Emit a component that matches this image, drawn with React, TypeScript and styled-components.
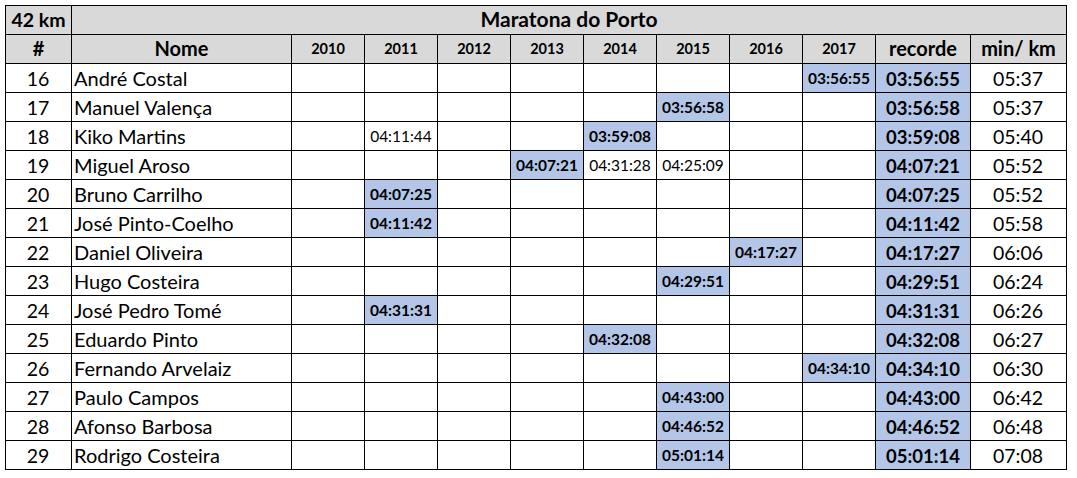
import * as React from 'react';
import styled, { createGlobalStyle } from 'styled-components';

const GlobalStyle = createGlobalStyle`
  html, body {
    margin: 0;
    padding: 0;
    background: #fff;
  }
  body {
    font-family: Lato, "Open Sans", sans-serif;
    color: #000;
  }
`;

const YEARS = [2010, 2011, 2012, 2013, 2014, 2015, 2016, 2017];

type Runner = {
  rank: number;
  name: string;
  times: { [year: number]: string };
  best: number;
  pace: string;
};

const runners: Runner[] = [
  { rank: 16, name: 'André Costal', times: { 2017: '03:56:55' }, best: 2017, pace: '05:37' },
  { rank: 17, name: 'Manuel Valença', times: { 2015: '03:56:58' }, best: 2015, pace: '05:37' },
  { rank: 18, name: 'Kiko Martins', times: { 2011: '04:11:44', 2014: '03:59:08' }, best: 2014, pace: '05:40' },
  { rank: 19, name: 'Miguel Aroso', times: { 2013: '04:07:21', 2014: '04:31:28', 2015: '04:25:09' }, best: 2013, pace: '05:52' },
  { rank: 20, name: 'Bruno Carrilho', times: { 2011: '04:07:25' }, best: 2011, pace: '05:52' },
  { rank: 21, name: 'José Pinto-Coelho', times: { 2011: '04:11:42' }, best: 2011, pace: '05:58' },
  { rank: 22, name: 'Daniel Oliveira', times: { 2016: '04:17:27' }, best: 2016, pace: '06:06' },
  { rank: 23, name: 'Hugo Costeira', times: { 2015: '04:29:51' }, best: 2015, pace: '06:24' },
  { rank: 24, name: 'José Pedro Tomé', times: { 2011: '04:31:31' }, best: 2011, pace: '06:26' },
  { rank: 25, name: 'Eduardo Pinto', times: { 2014: '04:32:08' }, best: 2014, pace: '06:27' },
  { rank: 26, name: 'Fernando Arvelaiz', times: { 2017: '04:34:10' }, best: 2017, pace: '06:30' },
  { rank: 27, name: 'Paulo Campos', times: { 2015: '04:43:00' }, best: 2015, pace: '06:42' },
  { rank: 28, name: 'Afonso Barbosa', times: { 2015: '04:46:52' }, best: 2015, pace: '06:48' },
  { rank: 29, name: 'Rodrigo Costeira', times: { 2015: '05:01:14' }, best: 2015, pace: '07:08' },
];

const Page = styled.div`
  padding: 5px;
`;

const Sheet = styled.div`
  display: grid;
  grid-template-columns: 65px 219px repeat(8, 72px) 94px 95px;
  grid-auto-rows: 28px;
  gap: 1px;
  padding: 1px;
  background: #000;
  width: max-content;
`;

const Cell = styled.div<{ $align?: 'left' | 'center'; $fill?: 'head' | 'best' }>`
  display: flex;
  align-items: flex-end;
  justify-content: ${(p) => (p.$align === 'left' ? 'flex-start' : 'center')};
  padding: 0 3px 4px;
  background: ${(p) => (p.$fill === 'head' ? '#d9d9d9' : p.$fill === 'best' ? '#b4c6e7' : '#fff')};
  white-space: nowrap;
  overflow: hidden;
  line-height: 1;
`;

const TitleCell = styled(Cell)<{ $span?: boolean }>`
  grid-column: ${(p) => (p.$span ? '2 / -1' : 'auto')};
  font-weight: 700;
  font-size: ${(p) => (p.$span ? '21px' : '19.5px')};
  padding-bottom: 5px;
`;

const HeadCell = styled(Cell)<{ $small?: boolean }>`
  font-weight: 700;
  font-size: ${(p) => (p.$small ? '14.5px' : '20px')};
  padding-bottom: ${(p) => (p.$small ? '7px' : '5px')};
`;

const TextCell = styled(Cell)<{ $wide?: boolean }>`
  font-size: ${(p) => (p.$wide ? '20px' : '19.5px')};
  padding-left: 2px;
`;

const TimeCell = styled(Cell)<{ $bold?: boolean }>`
  font-size: 15.5px;
  font-weight: ${(p) => (p.$bold ? 700 : 400)};
  padding: 0 0 6px;
`;

const RecordCell = styled(Cell)`
  font-size: 18.5px;
  font-weight: 700;
`;

export default function App() {
  return (
    <Page>
      <GlobalStyle />
      <Sheet>
        <TitleCell $fill="head">42 km</TitleCell>
        <TitleCell $fill="head" $span>Maratona do Porto</TitleCell>

        <HeadCell $fill="head">#</HeadCell>
        <HeadCell $fill="head">Nome</HeadCell>
        {YEARS.map((y) => (
          <HeadCell key={y} $fill="head" $small>{y}</HeadCell>
        ))}
        <HeadCell $fill="head">recorde</HeadCell>
        <HeadCell $fill="head">min/ km</HeadCell>

        {runners.map((r) => (
          <React.Fragment key={r.rank}>
            <TextCell>{r.rank}</TextCell>
            <TextCell $align="left" $wide>{r.name}</TextCell>
            {YEARS.map((y) => {
              const best = y === r.best;
              return (
                <TimeCell key={y} $bold={best} $fill={best ? 'best' : undefined}>
                  {r.times[y] || ''}
                </TimeCell>
              );
            })}
            <RecordCell $fill="best">{r.times[r.best]}</RecordCell>
            <TextCell>{r.pace}</TextCell>
          </React.Fragment>
        ))}
      </Sheet>
    </Page>
  );
}
